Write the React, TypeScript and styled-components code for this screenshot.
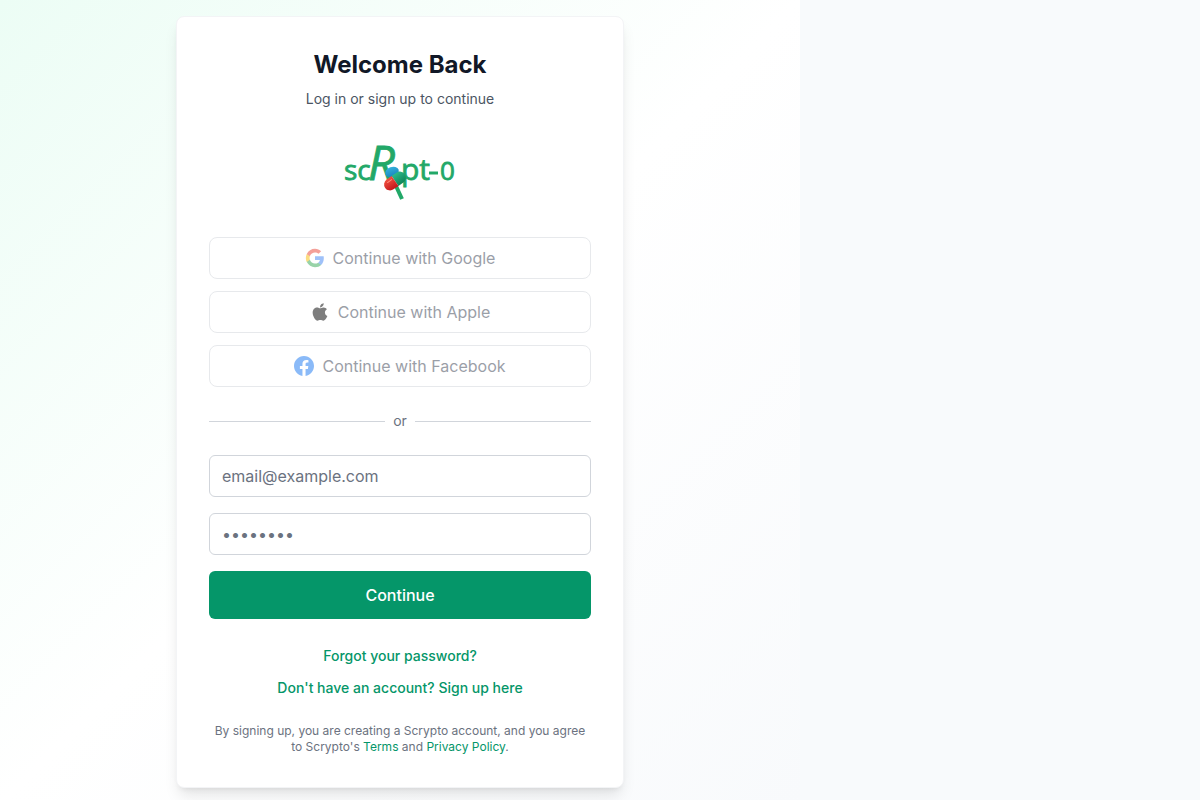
import React from "react";
import styled, { createGlobalStyle } from "styled-components";
import { FaApple } from "react-icons/fa";

const GlobalStyle = createGlobalStyle`
  *, *::before, *::after { box-sizing: border-box; }
  body {
    margin: 0;
    background: #f8fafc;
    font-family: Inter, "Liberation Sans", sans-serif;
    font-size: 16px;
    line-height: 24px;
    color: #111827;
  }
  button, input { font: inherit; }
  h1, p { margin: 0; }
`;

const Page = styled.div`
  display: grid;
  grid-template-columns: 2fr 1fr;
  min-height: 100vh;

  @media (max-width: 760px) {
    grid-template-columns: 1fr;
  }
`;

const Panel = styled.main`
  display: flex;
  align-items: center;
  justify-content: center;
  padding: 16px;
  background: linear-gradient(to bottom right, #ecfdf5, #ffffff, #f8fafc);
`;

const Card = styled.section`
  width: 100%;
  max-width: 448px;
  padding: 32px;
  background: #ffffff;
  border: 1px solid #f3f4f6;
  border-radius: 8px;
  box-shadow: 0 10px 15px -3px rgba(0, 0, 0, 0.1), 0 4px 6px -4px rgba(0, 0, 0, 0.1);
`;

const Header = styled.header`
  display: flex;
  flex-direction: column;
  align-items: center;
  text-align: center;
  margin-bottom: 24px;
`;

const Title = styled.h1`
  font-size: 24px;
  line-height: 32px;
  font-weight: 700;
`;

const Subtitle = styled.p`
  margin: 8px 0 24px;
  font-size: 14px;
  line-height: 20px;
  color: #4b5563;
`;

const LogoArt = styled.svg`
  display: block;
  width: 120px;
  height: 80px;
  overflow: visible;
  fill: #22a868;
  font-family: "Open Sans", "Noto Sans", sans-serif;
  font-weight: 400;
`;

const Providers = styled.div`
  display: grid;
  gap: 12px;
`;

const ProviderButton = styled.button`
  display: flex;
  align-items: center;
  justify-content: center;
  gap: 8px;
  width: 100%;
  padding: 8px 16px;
  background: #ffffff;
  border: 1px solid #d1d5db;
  border-radius: 8px;
  color: #374151;
  opacity: 0.5;
`;

const ProviderIcon = styled.svg`
  width: 20px;
  height: 20px;
  flex: none;
`;

const AppleIcon = styled(FaApple)`
  width: 20px;
  height: 20px;
  flex: none;
  color: #000000;
`;

const Divider = styled.div`
  display: flex;
  align-items: center;
  gap: 8px;
  margin: 24px 0;
  font-size: 14px;
  line-height: 20px;
  color: #6b7280;

  &::before,
  &::after {
    content: "";
    flex: 1;
    height: 1px;
    background: #d1d5db;
  }
`;

const Form = styled.form`
  display: grid;
  gap: 16px;
`;

const Field = styled.input`
  width: 100%;
  height: 42px;
  padding: 8px 12px;
  background: #ffffff;
  border: 1px solid #d1d5db;
  border-radius: 6px;
  color: #111827;

  &::placeholder {
    color: #6b7280;
    opacity: 1;
  }
`;

const SubmitButton = styled.button`
  height: 48px;
  padding: 12px 16px;
  background: #059669;
  border: 0;
  border-radius: 6px;
  color: #ffffff;
  font-weight: 500;
  cursor: pointer;
`;

const Links = styled.nav`
  display: grid;
  gap: 8px;
  margin: 24px 0;
  text-align: center;
`;

const AccountLink = styled.a`
  font-size: 14px;
  line-height: 20px;
  font-weight: 500;
  color: #059669;
  text-decoration: none;
`;

const Legal = styled.p`
  font-size: 12px;
  line-height: 16px;
  text-align: center;
  color: #6b7280;
`;

const LegalLink = styled.a`
  color: #059669;
  text-decoration: none;
`;

function Logo() {
  return (
    <LogoArt viewBox="0 0 120 80" role="img" aria-label="Scrypt-O">
      <defs>
        <linearGradient id="pillBlue" x1="0" y1="0" x2="0" y2="1">
          <stop offset="0" stopColor="#35b0dc" />
          <stop offset="1" stopColor="#1684bd" />
        </linearGradient>
        <linearGradient id="pillRed" x1="0" y1="0" x2="0" y2="1">
          <stop offset="0" stopColor="#f0503f" />
          <stop offset="1" stopColor="#c3161c" />
        </linearGradient>
        <linearGradient id="pillGreen" x1="0" y1="0" x2="0" y2="1">
          <stop offset="0" stopColor="#2bb98a" />
          <stop offset="1" stopColor="#0f8559" />
        </linearGradient>
      </defs>
      <g stroke="#22a868" strokeWidth="0.8">
        <text x="4" y="47" fontSize="28">sc</text>
        <text x="28" y="47" fontSize="47" fontStyle="italic">R</text>
        <text x="61" y="47" fontSize="30">pt</text>
        <text x="100" y="47" fontSize="26">0</text>
      </g>
      <path d="M89 40 H98" stroke="#22a868" strokeWidth="3" />
      <path d="M56 53 L62 66" stroke="#22a868" strokeWidth="4" />
      <ellipse cx="52" cy="39" rx="7" ry="5" transform="rotate(-20 52 39)" fill="url(#pillBlue)" />
      <g transform="rotate(-35 55 48)">
        <path d="M55 42 H61 A6 6 0 0 1 61 54 H55 Z" fill="url(#pillGreen)" />
        <path d="M55 42 H49 A6 6 0 0 0 49 54 H55 Z" fill="url(#pillRed)" />
        <path d="M48 45 H53" stroke="#ff8d7c" strokeWidth="1" strokeLinecap="round" />
      </g>
    </LogoArt>
  );
}

function GoogleIcon() {
  return (
    <ProviderIcon viewBox="0 0 24 24" aria-hidden="true">
      <path fill="#4285F4" d="M22.56 12.25c0-.78-.07-1.53-.2-2.25H12v4.26h5.92c-.26 1.37-1.04 2.53-2.21 3.31v2.77h3.57c2.08-1.92 3.28-4.74 3.28-8.09z" />
      <path fill="#34A853" d="M12 23c2.97 0 5.46-.98 7.28-2.66l-3.57-2.77c-.98.66-2.23 1.06-3.71 1.06-2.86 0-5.29-1.93-6.16-4.53H2.18v2.84C3.99 20.53 7.7 23 12 23z" />
      <path fill="#FBBC05" d="M5.84 14.09c-.22-.66-.35-1.36-.35-2.09s.13-1.43.35-2.09V7.07H2.18C1.43 8.55 1 10.22 1 12s.43 3.45 1.18 4.93l2.85-2.22.81-.62z" />
      <path fill="#EA4335" d="M12 5.38c1.62 0 3.06.56 4.21 1.64l3.15-3.15C17.45 2.09 14.97 1 12 1 7.7 1 3.99 3.47 2.18 7.07l3.66 2.84c.87-2.6 3.3-4.53 6.16-4.53z" />
    </ProviderIcon>
  );
}

function FacebookIcon() {
  return (
    <ProviderIcon viewBox="0 0 24 24" fill="#1877F2" aria-hidden="true">
      <path d="M24 12.073c0-6.627-5.373-12-12-12s-12 5.373-12 12c0 5.99 4.388 10.954 10.125 11.854v-8.385H7.078v-3.47h3.047V9.43c0-3.007 1.792-4.669 4.533-4.669 1.312 0 2.686.235 2.686.235v2.953H15.83c-1.491 0-1.956.925-1.956 1.874v2.25h3.328l-.532 3.47h-2.796v8.385C19.612 23.027 24 18.062 24 12.073z" />
    </ProviderIcon>
  );
}

const providers = [
  { name: "Google", Icon: GoogleIcon },
  { name: "Apple", Icon: AppleIcon },
  { name: "Facebook", Icon: FacebookIcon },
];

export default function App() {
  return (
    <>
      <GlobalStyle />
      <Page>
        <Panel>
          <Card>
            <Header>
              <Title>Welcome Back</Title>
              <Subtitle>Log in or sign up to continue</Subtitle>
              <Logo />
            </Header>
            <Providers>
              {providers.map(({ name, Icon }) => (
                <ProviderButton key={name} type="button" disabled>
                  <Icon />
                  <span>Continue with {name}</span>
                </ProviderButton>
              ))}
            </Providers>
            <Divider>or</Divider>
            <Form onSubmit={(event: React.FormEvent) => event.preventDefault()}>
              <Field type="email" aria-label="Email" placeholder="email@example.com" />
              <Field type="password" aria-label="Password" placeholder="••••••••" />
              <SubmitButton type="submit">Continue</SubmitButton>
            </Form>
            <Links>
              <div>
                <AccountLink href="#forgot">Forgot your password?</AccountLink>
              </div>
              <div>
                <AccountLink href="#signup">Don't have an account? Sign up here</AccountLink>
              </div>
            </Links>
            <Legal>
              By signing up, you are creating a Scrypto account, and you agree to Scrypto's{" "}
              <LegalLink href="#terms">Terms</LegalLink> and{" "}
              <LegalLink href="#privacy">Privacy Policy</LegalLink>.
            </Legal>
          </Card>
        </Panel>
      </Page>
    </>
  );
}
